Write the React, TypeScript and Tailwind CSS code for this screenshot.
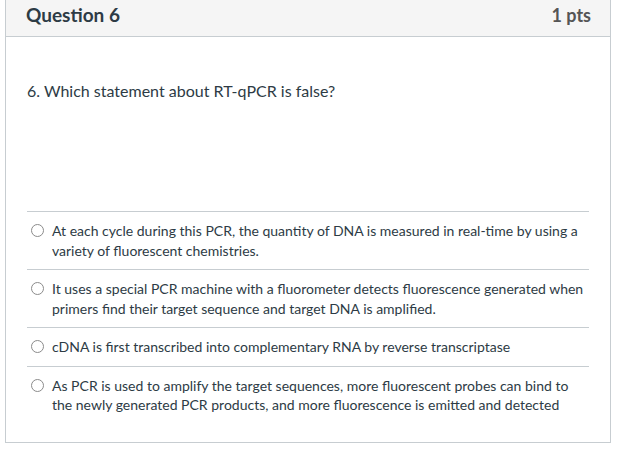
const answers = [
  'At each cycle during this PCR, the quantity of DNA is measured in real-time by using a variety of fluorescent chemistries.',
  'It uses a special PCR machine with a fluorometer detects fluorescence generated when primers find their target sequence and target DNA is amplified.',
  'cDNA is first transcribed into complementary RNA by reverse transcriptase',
  'As PCR is used to amplify the target sequences, more fluorescent probes can bind to the newly generated PCR products, and more fluorescence is emitted and detected',
]

function Radio() {
  return <span className="mt-[3px] h-[13px] w-[13px] shrink-0 rounded-full border border-[#8b8b8b] bg-white" />
}

export default function App() {
  return (
    <div className="min-h-screen bg-white pl-[5px] pb-[6px]" style={{ fontFamily: 'Lato, "Open Sans", sans-serif' }}>
      <div className="w-[606px] border border-t-0 border-[#c7cdd1]">
        <div className="flex h-[37px] items-baseline justify-between border-b border-[#c7cdd1] bg-[#f5f5f5] pl-[20px] pr-[19px] pt-[2px]">
          <h2 className="text-[19px] font-bold leading-[26px] text-[#2d3b45]">Question 6</h2>
          <span className="text-[18px] font-bold leading-[26px] text-[#555]">1 pts</span>
        </div>
        <div className="px-[21px] pb-[18px] pt-[43px] text-[#2d3b45]">
          <p className="text-[16px] leading-[22px]">6. Which statement about RT-qPCR is false?</p>
          <div className="mt-[109px]">
            {answers.map((a, i) => (
              <div key={i} className="flex gap-[8px] border-t border-[#c7cdd1] py-[9px] pl-[4px]">
                <Radio />
                <span className="text-[14px] leading-[19.5px]">{a}</span>
              </div>
            ))}
          </div>
        </div>
      </div>
    </div>
  )
}
